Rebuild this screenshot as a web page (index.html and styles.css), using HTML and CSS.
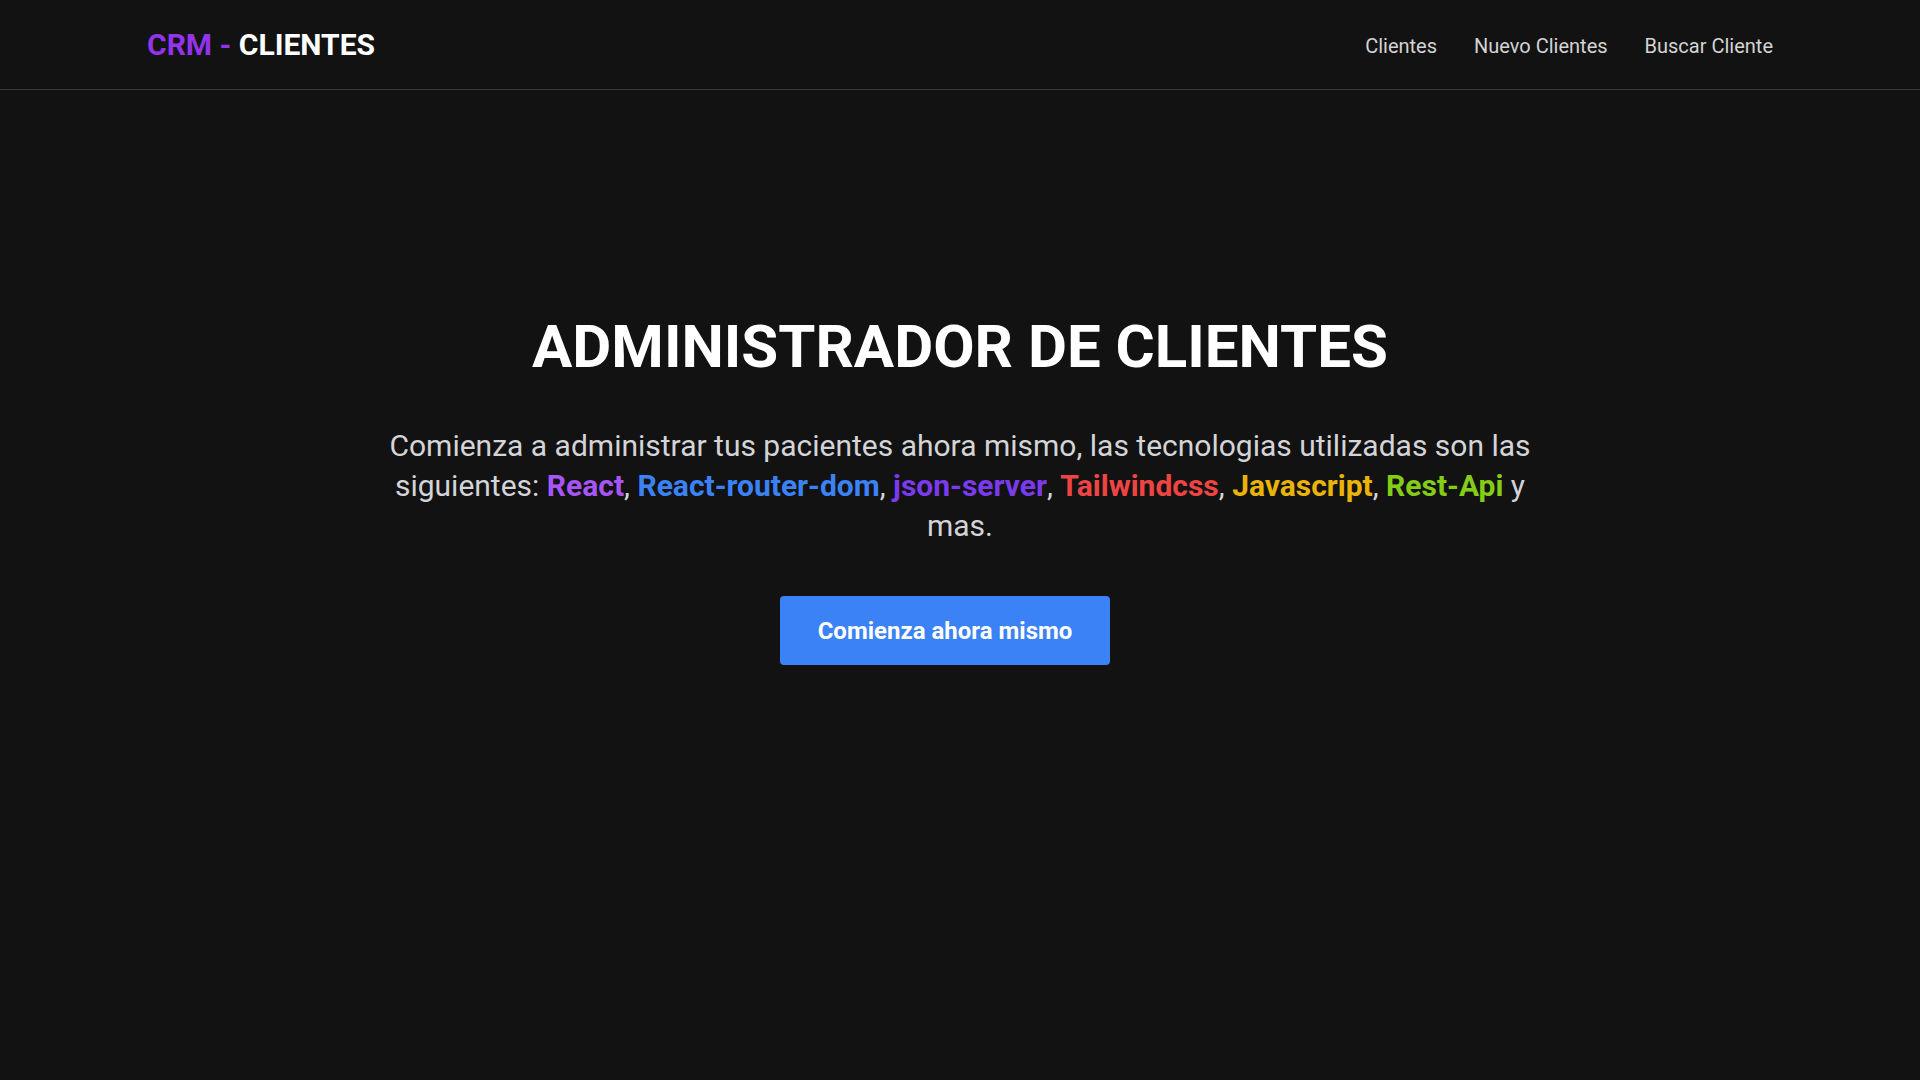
FILE: index.html
```html
<!DOCTYPE html>
<html lang="es">
<head>
    <meta charset="UTF-8">
    <meta name="viewport" content="width=device-width, initial-scale=1.0">
    <title>CRM - Clientes</title>
    <link rel="stylesheet" href="styles.css">
</head>
<body>
    <header class="header">
        <div class="header-inner">
            <a href="#" class="logo"><span class="logo-accent">CRM -</span> CLIENTES</a>
            <nav class="nav">
                <a href="#" class="nav-link">Clientes</a>
                <a href="#" class="nav-link">Nuevo Clientes</a>
                <a href="#" class="nav-link">Buscar Cliente</a>
            </nav>
        </div>
    </header>

    <main class="hero">
        <h1 class="hero-title">ADMINISTRADOR DE CLIENTES</h1>
        <p class="hero-text">
            Comienza a administrar tus pacientes ahora mismo, las tecnologias utilizadas son las siguientes:
            <span class="tech tech-react">React</span>,
            <span class="tech tech-router">React-router-dom</span>,
            <span class="tech tech-json">json-server</span>,
            <span class="tech tech-tailwind">Tailwindcss</span>,
            <span class="tech tech-js">Javascript</span>,
            <span class="tech tech-api">Rest-Api</span> y mas.
        </p>
        <div class="hero-actions">
            <a href="#" class="btn">Comienza ahora mismo</a>
        </div>
    </main>
</body>
</html>
```

FILE: styles.css
```css
* {
    box-sizing: border-box;
}

body {
    margin: 0;
    background-color: #121212;
    color: #d4d4d8;
    font-family: Roboto, "Liberation Sans", Arial, sans-serif;
}

a {
    text-decoration: none;
}

/* header */
.header {
    border-bottom: 1px solid #3a3a3a;
}

.header-inner {
    display: flex;
    justify-content: space-between;
    align-items: flex-start;
    padding: 27px 147px 26px 147px;
}

.logo {
    font-size: 30px;
    line-height: 36px;
    font-weight: 700;
    color: #ffffff;
}

.logo-accent {
    color: #9333ea;
}

.nav {
    display: flex;
    gap: 37px;
    margin-top: 5px;
}

.nav-link {
    font-size: 20px;
    line-height: 28px;
    color: #d4d4d4;
}

/* hero */
.hero {
    padding-top: 227px;
    text-align: center;
}

.hero-title {
    margin: 0;
    font-size: 60px;
    line-height: 60px;
    font-weight: 700;
    color: #ffffff;
}

.hero-text {
    max-width: 1152px;
    margin: 49px auto 0;
    font-size: 30px;
    line-height: 40px;
    color: #d4d4d8;
}

.tech {
    font-weight: 700;
}

.tech-react { color: #a855f7; }
.tech-router { color: #3b82f6; }
.tech-json { color: #7c3aed; }
.tech-tailwind { color: #ef4444; }
.tech-js { color: #eab308; }
.tech-api { color: #84cc16; }

.hero-actions {
    margin-top: 50px;
    padding-right: 30px;
}

.btn {
    display: inline-block;
    padding: 19px 38px 17px;
    font-size: 24px;
    line-height: 33px;
    font-weight: 700;
    color: #ffffff;
    background-color: #3b82f6;
    border-radius: 4px;
}
```
